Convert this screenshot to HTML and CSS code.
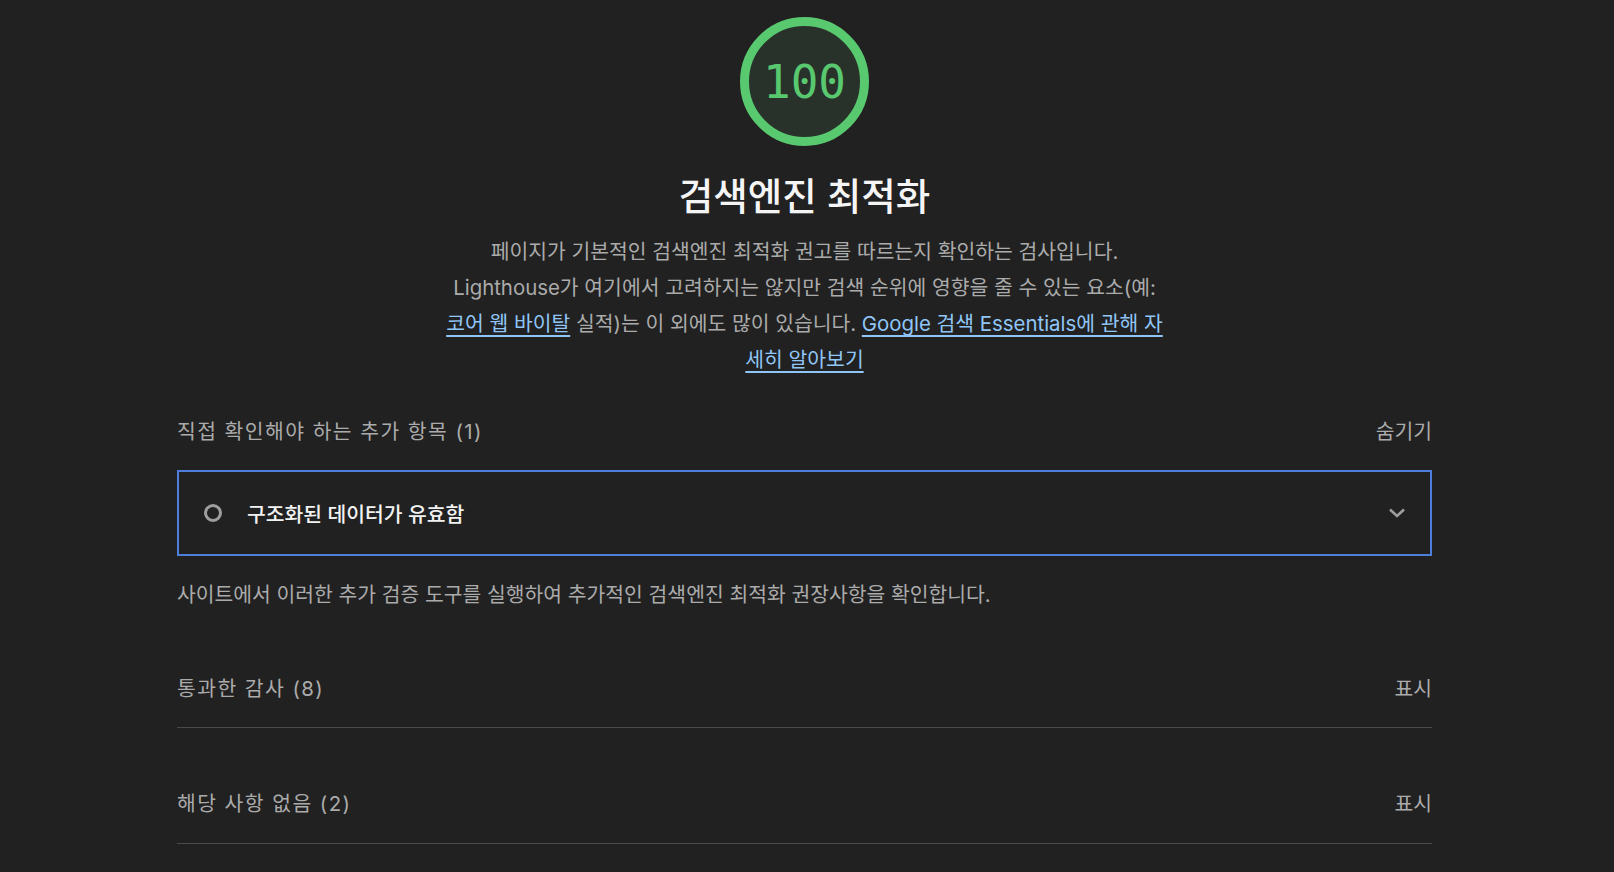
FILE: index.html
```html
<!DOCTYPE html>
<html lang="ko">
<head>
    <meta charset="UTF-8">
    <title>검색엔진 최적화</title>
    <link rel="stylesheet" href="styles.css">
</head>
<body>
    <div class="category">
        <div class="category-header">
            <div class="gauge">
                <span class="gauge-score">100</span>
            </div>
            <h2 class="category-title">검색엔진 최적화</h2>
            <p class="category-description">
                페이지가 기본적인 검색엔진 최적화 권고를 따르는지 확인하는 검사입니다.<br>
                Lighthouse가 여기에서 고려하지는 않지만 검색 순위에 영향을 줄 수 있는 요소(예:<br>
                <a href="#">코어 웹 바이탈</a> 실적)는 이 외에도 많이 있습니다. <a href="#">Google 검색 Essentials에 관해 자<br>세히 알아보기</a>
            </p>
        </div>

        <div class="audit-group group-manual">
            <div class="group-header">
                <span class="group-title">직접 확인해야 하는 추가 항목 (1)</span>
                <span class="group-toggle">숨기기</span>
            </div>
            <div class="audit">
                <span class="audit-icon"></span>
                <span class="audit-title">구조화된 데이터가 유효함</span>
                <svg class="audit-chevron" width="18" height="12" viewBox="0 0 18 12">
                    <path d="M2 2.5 L9 9 L16 2.5" fill="none" stroke="#9e9e9e" stroke-width="2.6"/>
                </svg>
            </div>
            <p class="group-description">사이트에서 이러한 추가 검증 도구를 실행하여 추가적인 검색엔진 최적화 권장사항을 확인합니다.</p>
        </div>

        <div class="audit-group group-collapsed group-passed">
            <div class="group-header">
                <span class="group-title">통과한 감사 (8)</span>
                <span class="group-toggle">표시</span>
            </div>
        </div>

        <div class="audit-group group-collapsed">
            <div class="group-header">
                <span class="group-title">해당 사항 없음 (2)</span>
                <span class="group-toggle">표시</span>
            </div>
        </div>
    </div>
</body>
</html>
```

FILE: styles.css
```css
:root {
    --report-background: #212121;
    --report-text: #f5f5f5;
    --report-text-secondary: #ababab;
    --color-pass: #58c96f;
    --color-pass-fill: #29322a;
    --link-color: #90c6f7;
    --focus-color: #4c7fdc;
    --border-color: #4a4a4a;
    --icon-color: #9e9e9e;
}

body {
    margin: 0;
    padding: 0;
    background-color: var(--report-background);
    color: var(--report-text);
    font-family: Inter, "Noto Sans CJK KR", sans-serif;
    font-size: 20.4px;
}

.category {
    width: 1255px;
    margin-left: 177px;
    padding-top: 17px;
}

.category-header {
    display: flex;
    flex-direction: column;
    align-items: center;
}

.gauge {
    width: 129px;
    height: 129px;
    box-sizing: border-box;
    border: 9px solid var(--color-pass);
    border-radius: 50%;
    background-color: var(--color-pass-fill);
    display: flex;
    align-items: center;
    justify-content: center;
}

.gauge-score {
    font-family: "DejaVu Sans Mono", monospace;
    font-size: 46px;
    color: var(--color-pass);
    line-height: 1;
}

.category-title {
    margin: 29px 0 0;
    font-size: 37.5px;
    font-weight: 500;
    line-height: 44px;
    color: var(--report-text);
}

.category-description {
    margin: 15px 0 0;
    text-align: center;
    line-height: 36px;
    color: var(--report-text-secondary);
}

.category-description a {
    color: var(--link-color);
    text-decoration: underline;
    text-decoration-thickness: 2px;
    text-underline-offset: 4px;
}

.group-header {
    display: flex;
    justify-content: space-between;
    align-items: center;
    line-height: 28px;
    color: var(--report-text-secondary);
}

.group-title {
    letter-spacing: 1.45px;
}

.group-manual {
    margin-top: 40px;
}

.audit {
    margin-top: 24px;
    height: 86px;
    box-sizing: border-box;
    border: 2px solid var(--focus-color);
    padding: 0 24px 0 25px;
    display: flex;
    align-items: center;
}

.audit-icon {
    width: 18px;
    height: 18px;
    box-sizing: border-box;
    border: 3px solid var(--icon-color);
    border-radius: 50%;
    flex-shrink: 0;
}

.audit-title {
    margin-left: 25px;
    flex: 1;
    font-weight: 500;
    color: #f2f2f2;
}

.group-description {
    margin: 25px 0 0;
    line-height: 28px;
    color: var(--report-text-secondary);
}

.group-collapsed {
    padding: 62px 0 25px;
    border-bottom: 1px solid var(--border-color);
}

.group-passed {
    padding-top: 66px;
    padding-bottom: 24px;
}
```
